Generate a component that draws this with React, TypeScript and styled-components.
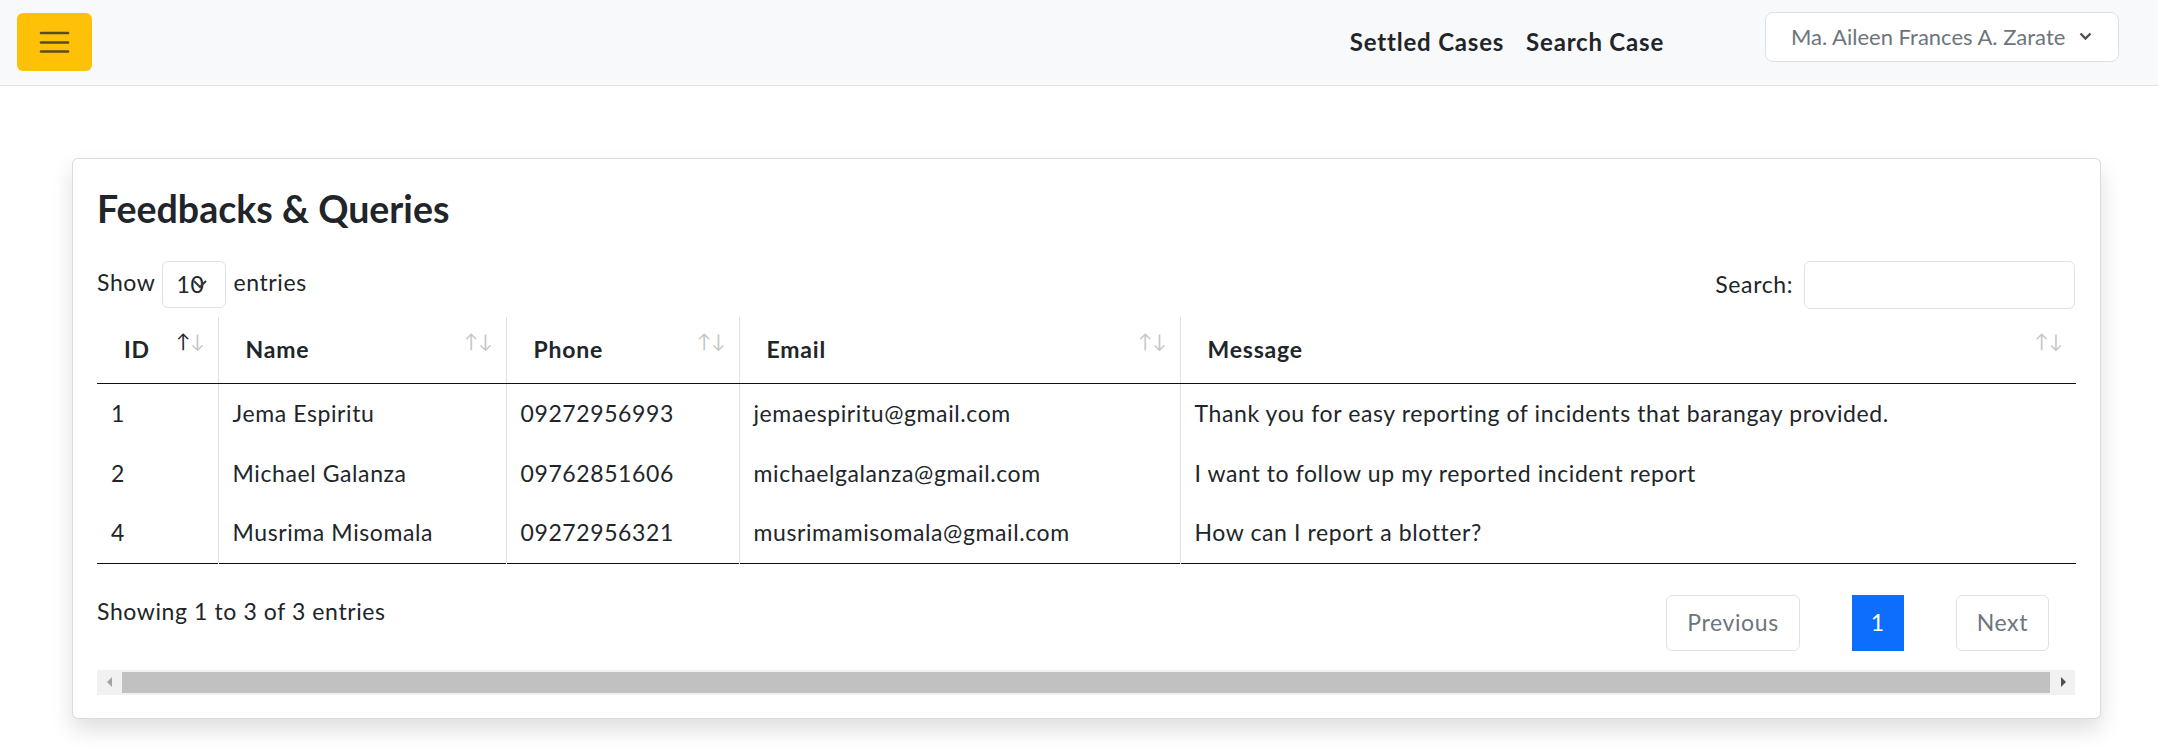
import React from "react";
import styled, { createGlobalStyle } from "styled-components";

const FONT = `Lato, "Noto Sans", "Liberation Sans", sans-serif`;

const Global = createGlobalStyle`
  html, body { margin: 0; padding: 0; background: #fff; }
  body { font-family: ${FONT}; font-size: 23px; letter-spacing: 0.6px; line-height: 33px; color: #212529; }
  * { box-sizing: border-box; }
`;

const Nav = styled.nav`
  height: 86px;
  background: #f8f9fa;
  border-bottom: 1px solid #dee2e6;
  display: flex;
  align-items: center;
  padding: 0 39px 0 17px;
`;

const Toggler = styled.button`
  width: 75px;
  height: 58px;
  border: none;
  border-radius: 6px;
  background: #ffc107;
  display: flex;
  align-items: center;
  justify-content: center;
  padding: 0;
  margin-top: -1px;
`;

const Spacer = styled.div`
  flex: 1;
`;

const NavLinks = styled.div`
  display: flex;
  gap: 22px;
  margin-top: -2px;
`;

const NavLink = styled.a`
  font-weight: 700;
  font-size: 24px;
  letter-spacing: 0.8px;
  color: #212529;
  text-decoration: none;
`;

const UserButton = styled.button`
  margin-left: 101px;
  height: 50px;
  width: 354px;
  margin-top: -12px;
  border: 1px solid #dee2e6;
  border-radius: 8px;
  background: #fff;
  color: #6c757d;
  font-family: ${FONT};
  font-size: 22px;
  letter-spacing: 0;
  display: flex;
  align-items: center;
  justify-content: space-between;
  padding: 0 26px 0 25px;
`;

const Main = styled.main`
  padding: 72px 57px 40px 72px;
`;

const Card = styled.section`
  border: 1px solid rgba(0, 0, 0, 0.14);
  border-radius: 6px;
  background: #fff;
  box-shadow: 0 11px 22px rgba(0, 0, 0, 0.13);
  padding: 27px 25px 23px 24px;
`;

const Title = styled.h3`
  margin: 0 0 29px;
  font-size: 37.5px;
  letter-spacing: 0;
  font-weight: 700;
  line-height: 46px;
  color: #212529;
`;

const Controls = styled.div`
  display: flex;
  justify-content: space-between;
  align-items: center;
  height: 47px;
  margin-bottom: 9px;
`;

const LengthLabel = styled.label`
  display: flex;
  align-items: center;
  gap: 7px;
  margin-top: -4px;
`;

const SelectBox = styled.div`
  position: relative;
  width: 64px;
  height: 47px;
  border: 1px solid #dee2e6;
  border-radius: 6px;
  padding-left: 13px;
  display: flex;
  align-items: center;
  margin-top: 4px;
`;

const SelectArrow = styled.svg`
  position: absolute;
  left: 29px;
  top: 16px;
`;

const SearchLabel = styled.label`
  display: flex;
  align-items: center;
  gap: 11px;
`;

const SearchInput = styled.input`
  width: 271px;
  height: 48px;
  border: 1px solid #dee2e6;
  border-radius: 6px;
  outline: none;
`;

const Table = styled.table`
  width: 100%;
  table-layout: fixed;
  border-collapse: collapse;
  border-bottom: 1px solid #111;
`;

const Col = styled.col<{ $w: number }>`
  width: ${(p) => p.$w}px;
`;

const Th = styled.th<{ $first?: boolean }>`
  position: relative;
  height: 66px;
  text-align: left;
  font-weight: 700;
  letter-spacing: 0.8px;
  padding: 0 30px 0 27px;
  border-left: ${(p) => (p.$first ? "none" : "1px solid #dee2e6")};
  border-bottom: 1px solid #111;
`;

const SortIcons = styled.span`
  position: absolute;
  right: 13px;
  top: 12px;
  font-size: 19px;
  line-height: 24px;
  letter-spacing: 0;
  font-weight: 400;
  display: flex;
`;

const Arrow = styled.span<{ $active?: boolean }>`
  color: ${(p) => (p.$active ? "#212529" : "#c4c6c8")};
`;

const Td = styled.td<{ $first?: boolean }>`
  height: 60px;
  padding: 0 14px;
  border-left: ${(p) => (p.$first ? "none" : "1px solid #dee2e6")};
  white-space: nowrap;
`;

const Footer = styled.div`
  display: flex;
  justify-content: space-between;
  align-items: flex-start;
  padding-top: 31px;
`;

const Info = styled.div`
  color: #212529;
`;

const Pager = styled.div`
  display: flex;
  gap: 52px;
  padding-right: 26px;
`;

const PageBtn = styled.span<{ $active?: boolean }>`
  height: 56px;
  display: flex;
  align-items: center;
  padding: 0 ${(p) => (p.$active ? "18px" : "20px")};
  border: 1px solid ${(p) => (p.$active ? "#0d6efd" : "#dee2e6")};
  border-radius: ${(p) => (p.$active ? "0" : "6px")};
  background: ${(p) => (p.$active ? "#0d6efd" : "#fff")};
  color: ${(p) => (p.$active ? "#fff" : "#6c757d")};
`;

const ScrollTrack = styled.div`
  margin-top: 19px;
  height: 25px;
  background: #f1f1f1;
  display: flex;
  align-items: center;
`;

const ScrollBtn = styled.div`
  width: 25px;
  height: 25px;
  display: flex;
  align-items: center;
  justify-content: center;
`;

const Thumb = styled.div`
  flex: 1;
  height: 21px;
  background: #c1c1c1;
`;

type Row = { id: string; name: string; phone: string; email: string; message: string };

const rows: Row[] = [
  { id: "1", name: "Jema Espiritu", phone: "09272956993", email: "jemaespiritu@gmail.com", message: "Thank you for easy reporting of incidents that barangay provided." },
  { id: "2", name: "Michael Galanza", phone: "09762851606", email: "michaelgalanza@gmail.com", message: "I want to follow up my reported incident report" },
  { id: "4", name: "Musrima Misomala", phone: "09272956321", email: "musrimamisomala@gmail.com", message: "How can I report a blotter?" },
];

const columns = [
  { label: "ID", w: 121 },
  { label: "Name", w: 288 },
  { label: "Phone", w: 233 },
  { label: "Email", w: 441 },
  { label: "Message", w: 896 },
];

export default function App() {
  return (
    <>
      <Global />
      <Nav>
        <Toggler aria-label="menu">
          <svg width="31" height="24" viewBox="0 0 31 24">
            <g stroke="rgba(33,37,41,0.75)" strokeWidth="2.6" strokeLinecap="round">
              <line x1="2" y1="3" x2="29" y2="3" />
              <line x1="2" y1="12.5" x2="29" y2="12.5" />
              <line x1="2" y1="21.5" x2="29" y2="21.5" />
            </g>
          </svg>
        </Toggler>
        <Spacer />
        <NavLinks>
          <NavLink href="#">Settled Cases</NavLink>
          <NavLink href="#">Search Case</NavLink>
        </NavLinks>
        <UserButton>
          <span>Ma. Aileen Frances A. Zarate</span>
          <svg width="13" height="9" viewBox="0 0 13 9">
            <polyline points="1.5,1.5 6.5,6.5 11.5,1.5" fill="none" stroke="#495057" strokeWidth="2.4" />
          </svg>
        </UserButton>
      </Nav>
      <Main>
        <Card>
          <Title>Feedbacks &amp; Queries</Title>
          <Controls>
            <LengthLabel>
              Show
              <SelectBox>
                10
                <SelectArrow width="16" height="12" viewBox="0 0 16 12">
                  <polyline points="2,3 8,9 14,3" fill="none" stroke="#343a40" strokeWidth="2" />
                </SelectArrow>
              </SelectBox>
              entries
            </LengthLabel>
            <SearchLabel>
              Search:
              <SearchInput type="search" />
            </SearchLabel>
          </Controls>
          <Table>
            <colgroup>
              {columns.map((c) => (
                <Col key={c.label} $w={c.w} />
              ))}
            </colgroup>
            <thead>
              <tr>
                {columns.map((c, i) => (
                  <Th key={c.label} $first={i === 0}>
                    {c.label}
                    <SortIcons>
                      <Arrow $active={i === 0}>↑</Arrow>
                      <Arrow>↓</Arrow>
                    </SortIcons>
                  </Th>
                ))}
              </tr>
            </thead>
            <tbody>
              {rows.map((r) => (
                <tr key={r.id}>
                  <Td $first>{r.id}</Td>
                  <Td>{r.name}</Td>
                  <Td>{r.phone}</Td>
                  <Td>{r.email}</Td>
                  <Td>{r.message}</Td>
                </tr>
              ))}
            </tbody>
          </Table>
          <Footer>
            <Info>Showing 1 to 3 of 3 entries</Info>
            <Pager>
              <PageBtn>Previous</PageBtn>
              <PageBtn $active>1</PageBtn>
              <PageBtn>Next</PageBtn>
            </Pager>
          </Footer>
          <ScrollTrack>
            <ScrollBtn>
              <svg width="8" height="10" viewBox="0 0 8 10">
                <polygon points="6,0 6,10 1,5" fill="#a3a3a3" />
              </svg>
            </ScrollBtn>
            <Thumb />
            <ScrollBtn>
              <svg width="8" height="10" viewBox="0 0 8 10">
                <polygon points="2,0 2,10 7,5" fill="#505050" />
              </svg>
            </ScrollBtn>
          </ScrollTrack>
        </Card>
      </Main>
    </>
  );
}
